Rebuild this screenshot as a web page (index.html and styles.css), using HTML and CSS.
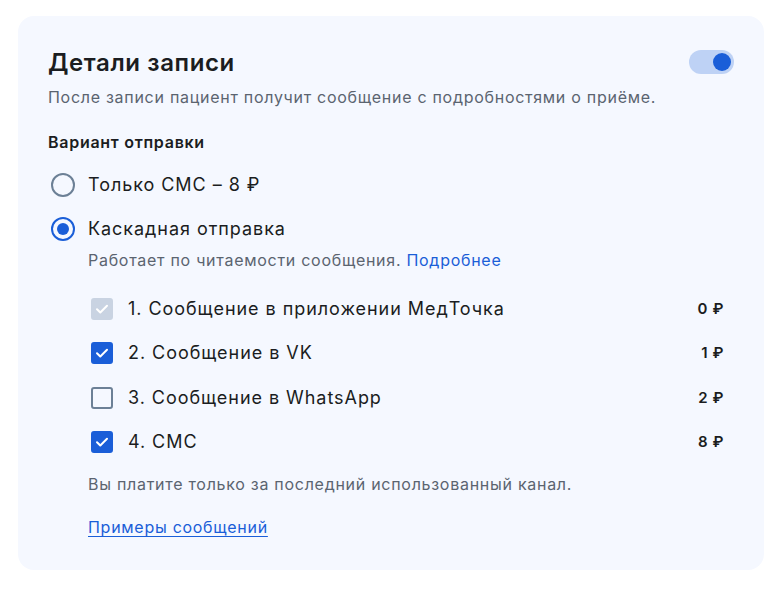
FILE: index.html
```html
<!DOCTYPE html>
<html lang="ru">
<head>
<meta charset="utf-8">
<link rel="stylesheet" href="styles.css">
</head>
<body>
<div class="card">
  <div class="head">
    <h1 class="title">Детали записи</h1>
    <span class="toggle"><span class="knob"></span></span>
  </div>
  <p class="desc">После записи пациент получит сообщение с подробностями о приёме.</p>
  <div class="label">Вариант отправки</div>
  <div class="radios">
    <div class="radio-row"><span class="radio"></span><span class="rtext">Только СМС – 8 ₽</span></div>
    <div class="radio-row"><span class="radio on"></span><span class="rtext">Каскадная отправка</span></div>
  </div>
  <p class="sub">Работает по читаемости сообщения. <a class="more" href="#">Подробнее</a></p>
  <div class="list">
    <div class="item"><span class="cb disabled"><svg viewBox="0 0 22 22" width="22" height="22"><path d="M6 11.2l3.3 3.3 6.7-6.8" fill="none" stroke="#fff" stroke-width="2" stroke-linecap="round" stroke-linejoin="round"/></svg></span><span class="itext">1. Сообщение в приложении МедТочка</span><span class="price">0 ₽</span></div>
    <div class="item"><span class="cb checked"><svg viewBox="0 0 22 22" width="22" height="22"><path d="M6 11.2l3.3 3.3 6.7-6.8" fill="none" stroke="#fff" stroke-width="2" stroke-linecap="round" stroke-linejoin="round"/></svg></span><span class="itext">2. Сообщение в VK</span><span class="price">1 ₽</span></div>
    <div class="item"><span class="cb"></span><span class="itext">3. Сообщение в WhatsApp</span><span class="price">2 ₽</span></div>
    <div class="item"><span class="cb checked"><svg viewBox="0 0 22 22" width="22" height="22"><path d="M6 11.2l3.3 3.3 6.7-6.8" fill="none" stroke="#fff" stroke-width="2" stroke-linecap="round" stroke-linejoin="round"/></svg></span><span class="itext">4. СМС</span><span class="price">8 ₽</span></div>
  </div>
  <p class="note">Вы платите только за последний использованный канал.</p>
  <a class="examples" href="#">Примеры сообщений</a>
</div>
</body>
</html>
```
FILE: styles.css
```css
* { box-sizing: border-box; }
html, body { margin: 0; background: #fff; }
body {
  padding: 16px 18px;
  font-family: Inter, "Noto Sans", sans-serif;
  color: #1b1d21;
}
.card {
  width: 746px;
  height: 554px;
  background: #f5f8ff;
  border-radius: 16px;
  padding: 31px 30px 30px 30px;
  display: flex;
  flex-direction: column;
}
.head {
  display: flex;
  justify-content: space-between;
  align-items: center;
  height: 32px;
}
.title {
  margin: 0;
  font-size: 24px;
  line-height: 32px;
  font-weight: 600;
  letter-spacing: 0.6px;
}
.toggle {
  width: 45px;
  height: 24px;
  border-radius: 12px;
  background: #bed2f5;
  display: flex;
  align-items: center;
  justify-content: flex-end;
  padding: 0 3px;
  margin-top: -2px;
}
.knob {
  width: 18px;
  height: 18px;
  border-radius: 50%;
  background: #1a5ed8;
}
.desc {
  margin: 6px 0 0;
  font-size: 16px;
  line-height: 24px;
  color: #5b6470;
  letter-spacing: 0.72px;
}
.label {
  margin-top: 21px;
  font-size: 16px;
  line-height: 24px;
  font-weight: 600;
  letter-spacing: 0.72px;
}
.radios {
  margin-top: 19px;
  display: flex;
  flex-direction: column;
  gap: 20px;
}
.radio-row {
  display: flex;
  align-items: center;
  height: 24px;
  padding-left: 3px;
}
.radio {
  width: 24px;
  height: 24px;
  border-radius: 50%;
  border: 2px solid #6c8096;
  margin-right: 13px;
  display: flex;
  align-items: center;
  justify-content: center;
}
.radio.on { border-color: #1a5ed8; }
.radio.on::after {
  content: "";
  width: 12px;
  height: 12px;
  border-radius: 50%;
  background: #1a5ed8;
}
.rtext {
  font-size: 18px;
  line-height: 24px;
  letter-spacing: 0.95px;
}
.sub {
  margin: 7px 0 0 40px;
  font-size: 16px;
  line-height: 24px;
  color: #5b6470;
  letter-spacing: 0.72px;
}
.more { color: #1a5ed8; text-decoration: none; }
.list {
  margin-top: 25px;
  display: flex;
  flex-direction: column;
  gap: 20.3px;
  padding-left: 43px;
}
.item {
  display: flex;
  align-items: center;
  height: 24px;
}
.cb {
  width: 22px;
  height: 22px;
  border-radius: 3px;
  border: 2px solid #6c8096;
  margin-right: 15px;
  flex: none;
  display: flex;
  align-items: center;
  justify-content: center;
  overflow: hidden;
}
.cb svg { flex: none; }
.cb.checked { background: #1a5ed8; border-color: #1a5ed8; }
.cb.disabled { background: #c9d3e2; border-color: #c9d3e2; }
.itext {
  flex: 1;
  font-size: 18px;
  line-height: 24px;
  letter-spacing: 0.95px;
}
.price {
  font-size: 15px;
  font-weight: 600;
  line-height: 24px;
  margin-right: 10px;
  letter-spacing: 0.6px;
}
.note {
  margin: 18px 0 0 40px;
  font-size: 16px;
  line-height: 24px;
  color: #5b6470;
  letter-spacing: 0.72px;
}
.examples {
  margin: 19px 0 0 40px;
  align-self: flex-start;
  font-size: 16px;
  line-height: 24px;
  color: #1a5ed8;
  text-decoration: underline;
  text-underline-offset: 3px;
  letter-spacing: 0.72px;
}
```
